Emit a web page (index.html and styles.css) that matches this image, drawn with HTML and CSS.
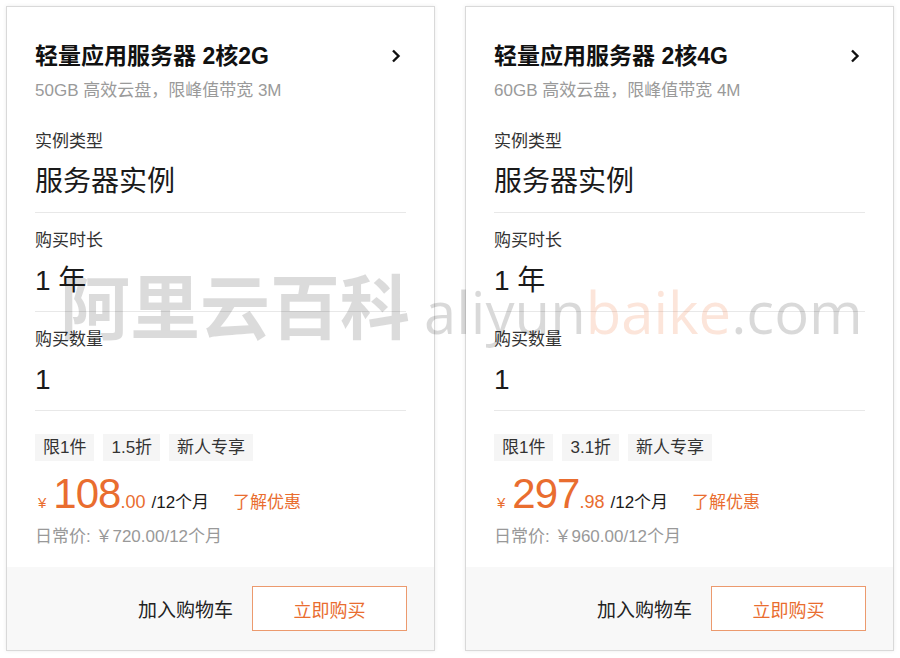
FILE: index.html
```html
<!DOCTYPE html>
<html lang="zh-CN">
<head>
    <meta charset="UTF-8">
    <meta name="viewport" content="width=device-width, initial-scale=1.0">
    <title>轻量应用服务器</title>
    <link rel="stylesheet" href="styles.css">
</head>
<body>

    <div class="cards">
        <!-- 2核2G -->
        <div class="card">
            <div class="card-body">
                <div class="card-head">
                    <div class="title-row">
                        <h3>轻量应用服务器 2核2G</h3>
                        <svg class="chevron" width="10" height="16" viewBox="0 0 10 16"><polyline points="2,2.5 7.5,8 2,13.5" fill="none" stroke="#111" stroke-width="2.4"/></svg>
                    </div>
                    <p class="sub">50GB 高效云盘，限峰值带宽 3M</p>
                </div>
                <div class="field">
                    <div class="label">实例类型</div>
                    <div class="value">服务器实例</div>
                </div>
                <div class="field">
                    <div class="label">购买时长</div>
                    <div class="value">1 年</div>
                </div>
                <div class="field">
                    <div class="label">购买数量</div>
                    <div class="value">1</div>
                </div>
                <div class="tags">
                    <span class="tag">限1件</span>
                    <span class="tag">1.5折</span>
                    <span class="tag">新人专享</span>
                </div>
                <div class="price">
                    <span class="yen">¥</span><span class="int">108</span><span class="dec">.00</span>
                    <span class="per">/12个月</span>
                    <a class="more" href="#">了解优惠</a>
                </div>
                <div class="orig">日常价: ￥720.00/12个月</div>
            </div>
            <div class="card-foot">
                <span class="cart">加入购物车</span>
                <button class="buy">立即购买</button>
            </div>
        </div>

        <!-- 2核4G -->
        <div class="card">
            <div class="card-body">
                <div class="card-head">
                    <div class="title-row">
                        <h3>轻量应用服务器 2核4G</h3>
                        <svg class="chevron" width="10" height="16" viewBox="0 0 10 16"><polyline points="2,2.5 7.5,8 2,13.5" fill="none" stroke="#111" stroke-width="2.4"/></svg>
                    </div>
                    <p class="sub">60GB 高效云盘，限峰值带宽 4M</p>
                </div>
                <div class="field">
                    <div class="label">实例类型</div>
                    <div class="value">服务器实例</div>
                </div>
                <div class="field">
                    <div class="label">购买时长</div>
                    <div class="value">1 年</div>
                </div>
                <div class="field">
                    <div class="label">购买数量</div>
                    <div class="value">1</div>
                </div>
                <div class="tags">
                    <span class="tag">限1件</span>
                    <span class="tag">3.1折</span>
                    <span class="tag">新人专享</span>
                </div>
                <div class="price">
                    <span class="yen">¥</span><span class="int">297</span><span class="dec">.98</span>
                    <span class="per">/12个月</span>
                    <a class="more" href="#">了解优惠</a>
                </div>
                <div class="orig">日常价: ￥960.00/12个月</div>
            </div>
            <div class="card-foot">
                <span class="cart">加入购物车</span>
                <button class="buy">立即购买</button>
            </div>
        </div>
    </div>

    <!-- watermark -->
    <div class="watermark">
        <span class="wm-cn">阿里云百科</span>
        <span class="wm-en">aliyun<em>baike</em>.com</span>
    </div>

</body>
</html>
```

FILE: styles.css
```css
body {
    margin: 0;
    padding: 6px;
    background-color: #fff;
    font-family: "Liberation Sans", "Noto Sans CJK SC", sans-serif;
    color: #1a1a1a;
    position: relative;
}
.cards {
    display: flex;
    gap: 30px;
}
.card {
    width: 429px;
    height: 645px;
    box-sizing: border-box;
    border: 1px solid #d9d9d9;
    box-shadow: 0 0 4px rgba(0, 0, 0, 0.08);
    display: flex;
    flex-direction: column;
    background-color: #fff;
}
.card-body {
    flex: 1;
    padding: 0 28px;
}
.card-head {
    padding: 34px 0 11px;
}
.title-row {
    display: flex;
    justify-content: space-between;
    align-items: center;
}
.title-row h3 {
    margin: 0;
    font-size: 23px;
    line-height: 30px;
    font-weight: 600;
    color: #111;
}
.chevron {
    margin-right: 5px;
}
.sub {
    margin: 8px 0 0;
    font-size: 17px;
    line-height: 24px;
    color: #9a9a9a;
}
.field {
    padding: 16px 0 10px;
    border-bottom: 1px solid #e8e8e8;
}
.label {
    font-size: 17px;
    line-height: 24px;
    color: #333;
}
.value {
    margin-top: 8px;
    font-size: 28px;
    line-height: 40px;
    color: #1a1a1a;
}
.tags {
    display: flex;
    gap: 9px;
    margin-top: 23px;
}
.tag {
    background-color: #f5f5f5;
    font-size: 17px;
    line-height: 27px;
    padding: 0 8px;
    color: #333;
}
.price {
    display: flex;
    align-items: baseline;
    margin-top: 11px;
    line-height: 44px;
    color: #e96d2f;
}
.yen {
    font-size: 15px;
    margin: 0 7px 0 3px;
}
.int {
    font-size: 42px;
    letter-spacing: -1px;
}
.dec {
    font-size: 18px;
}
.per {
    font-size: 17px;
    color: #1a1a1a;
    margin-left: 6px;
}
.more {
    font-size: 17px;
    margin-left: 24px;
    color: #e96d2f;
    text-decoration: none;
}
.orig {
    margin-top: 0;
    font-size: 17px;
    line-height: 24px;
    color: #999;
}
.card-foot {
    height: 83px;
    background-color: #f8f8f8;
    display: flex;
    justify-content: flex-end;
    align-items: center;
    padding-right: 27px;
}
.cart {
    font-size: 19px;
    color: #222;
    margin-right: 19px;
}
.buy {
    width: 155px;
    height: 45px;
    border: 1px solid #ec9a6e;
    background-color: #fff;
    color: #e96d2f;
    font-family: inherit;
    font-size: 18px;
}
.watermark {
    position: absolute;
    left: 60px;
    top: 253px;
    display: flex;
    align-items: baseline;
    pointer-events: none;
    white-space: nowrap;
}
.wm-cn {
    font-family: "Noto Sans CJK SC", sans-serif;
    font-size: 70px;
    font-weight: 700;
    color: rgba(0, 0, 0, 0.14);
}
.wm-en {
    margin-left: 14px;
    font-family: "Open Sans", sans-serif;
    font-size: 58px;
    color: rgba(0, 0, 0, 0.15);
}
.wm-en em {
    font-style: normal;
    color: rgba(240, 110, 50, 0.18);
}
```
